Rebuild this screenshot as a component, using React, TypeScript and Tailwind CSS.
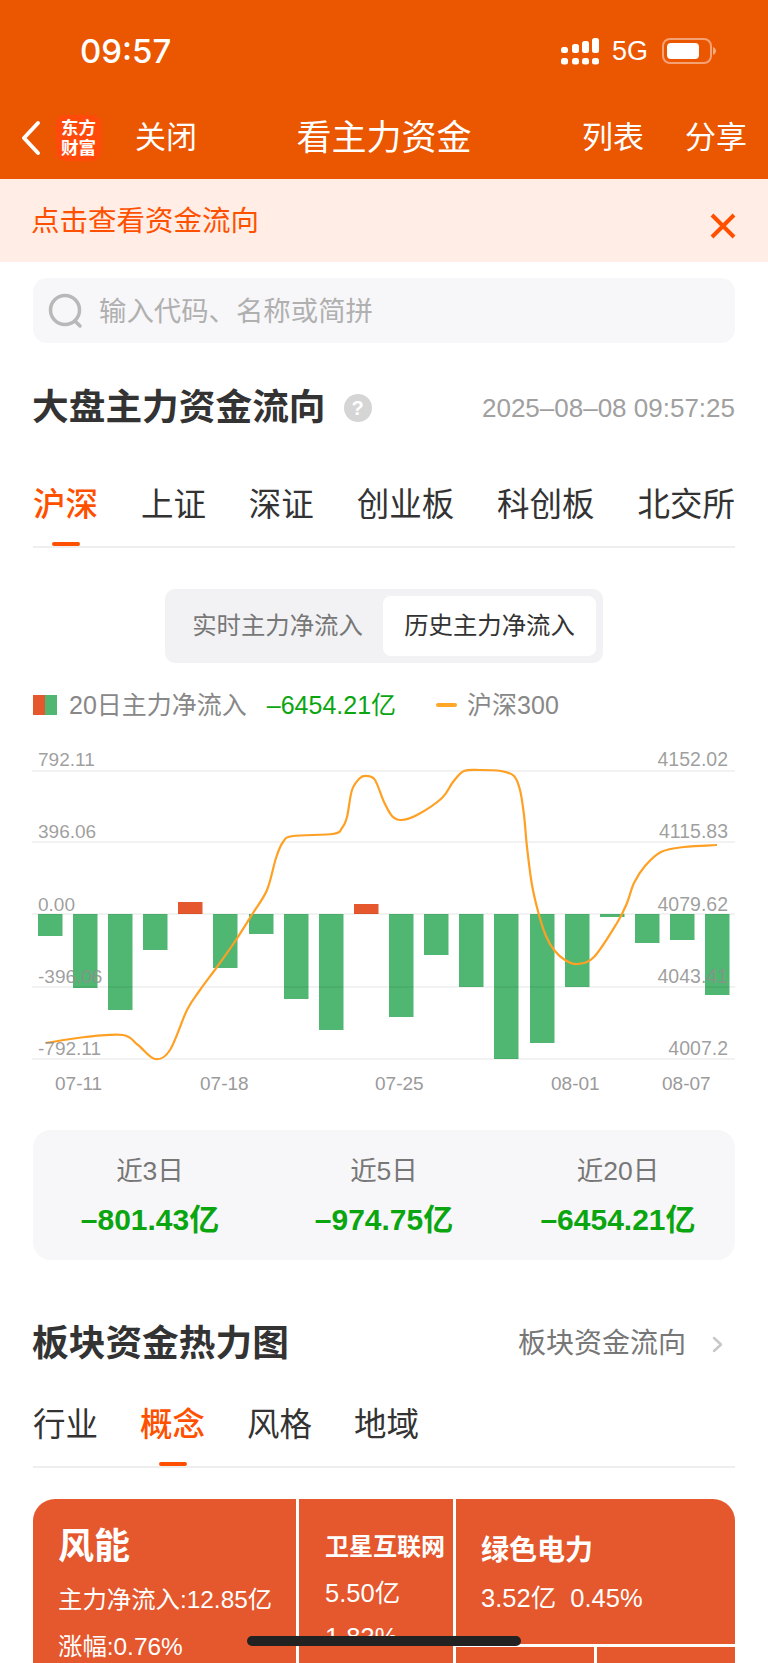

const bars: [number, number, boolean][] = [
  [38, 936, false],[73, 988, false],[108, 1010, false],[143, 950, false],[178, 902, true],
  [213, 968, false],[249, 934, false],[284, 999, false],[319, 1030, false],[354, 904, true],
  [389, 1017, false],[424, 955, false],[459, 987, false],[494, 1059, false],[530, 1043, false],
  [565, 987, false],[600, 917, false],[635, 943, false],[670, 940, false],[705, 995, false],
];
const pts: [number, number][] = [
  [46,1043],[85,1037],[123,1035],[138,1045],[155,1059],[170,1050],[187,1010],[200,990],[217,967],[236,940],[253,913],[267,890],[276,858],[283,842],[293,836],[333,834],[342,828],[347,817],[352,790],[360,778],[367,776],[375,780],[384,802],[392,816],[401,820],[417,815],[442,798],[453,782],[464,771],[480,770],[501,771],[514,776],[520,790],[524,815],[527,847],[532,885],[539,915],[546,936],[554,950],[565,960],[577,964],[594,957],[617,923],[627,903],[634,883],[645,866],[661,852],[684,847],[717,845],
];
function smooth(p: [number, number][]) {
  let d = `M${p[0][0]} ${p[0][1]}`;
  for (let i = 0; i < p.length - 1; i++) {
    const a = p[Math.max(0, i - 1)], b = p[i], c = p[i + 1], e = p[Math.min(p.length - 1, i + 2)];
    d += ` C${b[0] + (c[0] - a[0]) / 6} ${b[1] + (c[1] - a[1]) / 6} ${c[0] - (e[0] - b[0]) / 6} ${c[1] - (e[1] - b[1]) / 6} ${c[0]} ${c[1]}`;
  }
  return d;
}
const grid = [771, 842, 914, 987, 1059];
const leftLabels: [string, number][] = [["792.11", 766],["396.06", 838],["0.00", 911],["-396.06", 983],["-792.11", 1055]];
const rightLabels: [string, number][] = [["4152.02", 766],["4115.83", 838],["4079.62", 911],["4043.41", 983],["4007.2", 1055]];
const dates: [string, number][] = [["07-11", 55],["07-18", 200],["07-25", 375],["08-01", 551],["08-07", 662]];
const fontStack = "'Liberation Sans','Noto Sans CJK SC',sans-serif";

function Tabs({ items, active, between }: { items: string[]; active: number; between: boolean }) {
  return (
    <div className={between ? "flex justify-between border-b-2 border-[#EEEEEE]" : "flex gap-[42px] border-b-2 border-[#EEEEEE]"}>
      {items.map((t, i) => (
        <div key={t} className="flex flex-col items-center">
          <div className={i === active ? "h-[50px] text-[32.5px] leading-[50px] font-medium text-[#FF5000]" : "h-[50px] text-[32.5px] leading-[50px] text-[#333333]"}>{t}</div>
          <div className={i === active ? "mt-[12px] h-[4px] w-[28px] rounded-full bg-[#FF5000]" : "mt-[12px] h-[4px] w-[28px]"} />
        </div>
      ))}
    </div>
  );
}

function Stat({ label, value }: { label: string; value: string }) {
  return (
    <div className="flex flex-col items-center">
      <div className="text-[26.5px] leading-[30px] text-[#777777]">{label}</div>
      <div className="mt-[19px] text-[30px] leading-[30px] font-bold text-[#0AA50F]">{value}</div>
    </div>
  );
}

export default function App() {
  return (
    <div className="relative h-[1663px] w-[768px] overflow-hidden bg-white font-['Liberation_Sans','Noto_Sans_CJK_SC',sans-serif]">
      <header className="h-[179px] bg-[#EB5600] text-white">
        <div className="flex h-[98px] items-center justify-between pt-[4px] pr-[50px] pl-[80px]">
          <div className="font-['Inter',sans-serif] text-[33px] leading-none font-medium">09:57</div>
          <div className="flex items-center">
            <svg width="38" height="27" viewBox="0 0 38 27" fill="white">
              <rect x="0" y="9" width="7" height="6" rx="2.5" /><rect x="0" y="20" width="7" height="6.500" rx="2.5" />
              <rect x="11" y="6" width="7" height="9" rx="2.5" /><rect x="11" y="20" width="7" height="6.500" rx="2.5" />
              <rect x="21" y="3" width="7" height="12" rx="2.5" /><rect x="21" y="20" width="7" height="6.500" rx="2.5" />
              <rect x="31" y="0" width="7" height="15" rx="2.5" /><rect x="31" y="20" width="7" height="6.500" rx="2.5" />
            </svg>
            <div className="ml-[13px] text-[27px] leading-none">5G</div>
            <svg className="ml-[14px]" width="56" height="26" viewBox="0 0 56 26">
              <rect x="1" y="1" width="48" height="24" rx="7" fill="none" stroke="white" strokeOpacity="0.45" strokeWidth="2" />
              <rect x="5" y="5" width="32" height="16" rx="4" fill="white" />
              <path d="M51 9c2 1 3 2.500 3 4s-1 3-3 4z" fill="white" fillOpacity="0.5" />
            </svg>
          </div>
        </div>
        <div className="grid h-[81px] grid-cols-[1fr_auto_1fr] items-center pb-[2px]">
          <div className="flex items-center">
            <svg className="ml-[20px]" width="22" height="36" viewBox="0 0 22 36" fill="none" stroke="white" strokeWidth="4" strokeLinecap="round" strokeLinejoin="round">
              <path d="M18 3L4 18l14 15" />
            </svg>
            <div className="ml-[14px] flex h-[46px] w-[45px] flex-col items-center justify-center rounded-[9px] bg-[#FF4A0C] text-[17.5px] leading-[20px] font-bold">
              <span>东方</span>
              <span>财富</span>
            </div>
            <div className="ml-[34px] text-[31px] leading-none">关闭</div>
          </div>
          <div className="text-[35px] leading-none">看主力资金</div>
          <div className="flex justify-end gap-[41px] pr-[21px] text-[31px] leading-none">
            <span>列表</span>
            <span>分享</span>
          </div>
        </div>
      </header>

      <div className="flex h-[83px] items-center justify-between bg-[#FFEDE6] pr-[32px] pl-[31px]">
        <div className="pt-[1px] text-[28.5px] leading-none text-[#FF5000]">点击查看资金流向</div>
        <svg className="mt-[10px]" width="26" height="26" viewBox="0 0 26 26" fill="none" stroke="#FF5000" strokeWidth="4">
          <path d="M2 2l22 22M24 2L2 24" />
        </svg>
      </div>

      <main className="px-[33px]">
        <div className="mt-[16px] flex h-[65px] items-center rounded-[14px] bg-[#F7F7F9] pl-[15px]">
          <svg width="36" height="36" viewBox="0 0 36 36" fill="none" stroke="#B8B8B8" strokeWidth="3.500" strokeLinecap="round">
            <circle cx="17" cy="17" r="14.500" />
            <path d="M27 28l5 5" />
          </svg>
          <div className="ml-[15px] pt-[3px] text-[27.4px] leading-none text-[#B0B0B0]">输入代码、名称或简拼</div>
        </div>

        <div className="mt-[40px] flex h-[50px] items-center justify-between">
          <div className="flex items-center">
            <div className="-ml-[1px] text-[36.7px] leading-none font-bold text-[#333333]">大盘主力资金流向</div>
            <div className="ml-[18px] flex h-[28px] w-[28px] items-center justify-center rounded-full bg-[#D5D5D5] text-[20px] leading-none font-bold text-white">?</div>
          </div>
          <div className="text-[26px] leading-none text-[#A0A0A0]">2025–08–08 09:57:25</div>
        </div>

        <div className="mt-[47px]">
          <Tabs items={["沪深", "上证", "深证", "创业板", "科创板", "北交所"]} active={0} between />
        </div>

        <div className="mt-[41px] flex justify-center">
          <div className="flex h-[74px] w-[438px] rounded-[10px] bg-[#F2F2F4] p-[7px]">
            <div className="flex flex-1 items-center justify-center text-[24.400px] leading-none text-[#777777]">实时主力净流入</div>
            <div className="flex w-[213px] items-center justify-center rounded-[8px] bg-white text-[24.400px] leading-none text-[#333333]">历史主力净流入</div>
          </div>
        </div>

        <div className="mt-[27px] flex h-[30px] items-center text-[25px] leading-none">
          <div className="flex h-[20px] w-[24px]">
            <div className="flex-1 bg-[#E5572D]" />
            <div className="flex-1 bg-[#50B772]" />
          </div>
          <div className="ml-[12px] text-[#888888]">20日主力净流入</div>
          <div className="ml-[20px] text-[#0AA50F]">–6454.21亿</div>
          <div className="ml-[40px] h-[4px] w-[21px] rounded-full bg-[#FFA726]" />
          <div className="ml-[10px] text-[#888888]">沪深300</div>
        </div>
      </main>

      <svg className="block" width="768" height="400" viewBox="0 720 768 400" fontFamily={fontStack}>
        {bars.map(([x, y, red]) => (
          <rect key={x} x={x} y={Math.min(y, 914)} width="24.500" height={Math.abs(y - 914)} fill={red ? "#E5572D" : "#50B772"} />
        ))}
        {grid.map((y) => (
          <line key={y} x1="32" x2="735" y1={y} y2={y} stroke="#000000" strokeOpacity="0.07" strokeWidth="1.500" />
        ))}
        <path d={smooth(pts)} fill="none" stroke="#FFA024" strokeWidth="2.2" />
        {leftLabels.map(([t, y]) => (
          <text key={t} x="38" y={y} fontSize="19" fill="#8E8E8E" fillOpacity="0.85">{t}</text>
        ))}
        {rightLabels.map(([t, y]) => (
          <text key={t} x="728" y={y} fontSize="19.500" textAnchor="end" fill="#8E8E8E" fillOpacity="0.85">{t}</text>
        ))}
        {dates.map(([t, x]) => (
          <text key={t} x={x} y="1090" fontSize="19" fill="#9A9A9A">{t}</text>
        ))}
      </svg>

      <section className="px-[33px]">
        <div className="mt-[10px] grid h-[130px] grid-cols-3 content-center rounded-[18px] bg-[#F7F7F9]">
          <Stat label="近3日" value="–801.43亿" />
          <Stat label="近5日" value="–974.75亿" />
          <Stat label="近20日" value="–6454.21亿" />
        </div>

        <div className="mt-[59px] flex h-[50px] items-center justify-between">
          <div className="-ml-[1px] text-[36.7px] leading-none font-bold text-[#333333]">板块资金热力图</div>
          <div className="flex items-center pr-[12px]">
            <div className="text-[28px] leading-none text-[#777777]">板块资金流向</div>
            <svg className="ml-[26px]" width="11" height="17" viewBox="0 0 11 17" fill="none" stroke="#C8C8C8" strokeWidth="2.500" strokeLinecap="round" strokeLinejoin="round">
              <path d="M2 2l7 6.500-7 6.500" />
            </svg>
          </div>
        </div>

        <div className="mt-[31px]">
          <Tabs items={["行业", "概念", "风格", "地域"]} active={1} between={false} />
        </div>

        <div className="mt-[31px] flex h-[300px] gap-[3px] overflow-hidden rounded-t-[22px] text-white">
          <div className="w-[263px] bg-[#E5572D] pt-[24px] pl-[25px]">
            <div className="text-[36px] leading-[48px] font-bold">风能</div>
            <div className="mt-[12px] text-[24.400px] leading-[34px] whitespace-nowrap">主力净流入:12.85亿</div>
            <div className="mt-[13px] text-[24.400px] leading-[34px]">涨幅:0.76%</div>
          </div>
          <div className="w-[154px] bg-[#E5572D] pt-[31px] pl-[26px]">
            <div className="text-[24px] leading-[34px] font-bold whitespace-nowrap">卫星互联网</div>
            <div className="mt-[12px] text-[25.500px] leading-[34px]">5.50亿</div>
            <div className="mt-[10px] text-[25.500px] leading-[34px]">1.83%</div>
          </div>
          <div className="flex flex-1 flex-col gap-[3px]">
            <div className="h-[145px] bg-[#E5572D] pt-[33px] pl-[25px]">
              <div className="text-[28px] leading-[38px] font-bold">绿色电力</div>
              <div className="mt-[11px] text-[25.500px] leading-[34px] whitespace-pre">3.52亿  0.45%</div>
            </div>
            <div className="flex flex-1 gap-[3px]">
              <div className="flex-1 bg-[#E5572D]" />
              <div className="flex-1 bg-[#E5572D]" />
            </div>
          </div>
        </div>
      </section>

      <div className="absolute top-[1636px] left-[247px] h-[10px] w-[274px] rounded-full bg-[#222222]" />
    </div>
  );
}
